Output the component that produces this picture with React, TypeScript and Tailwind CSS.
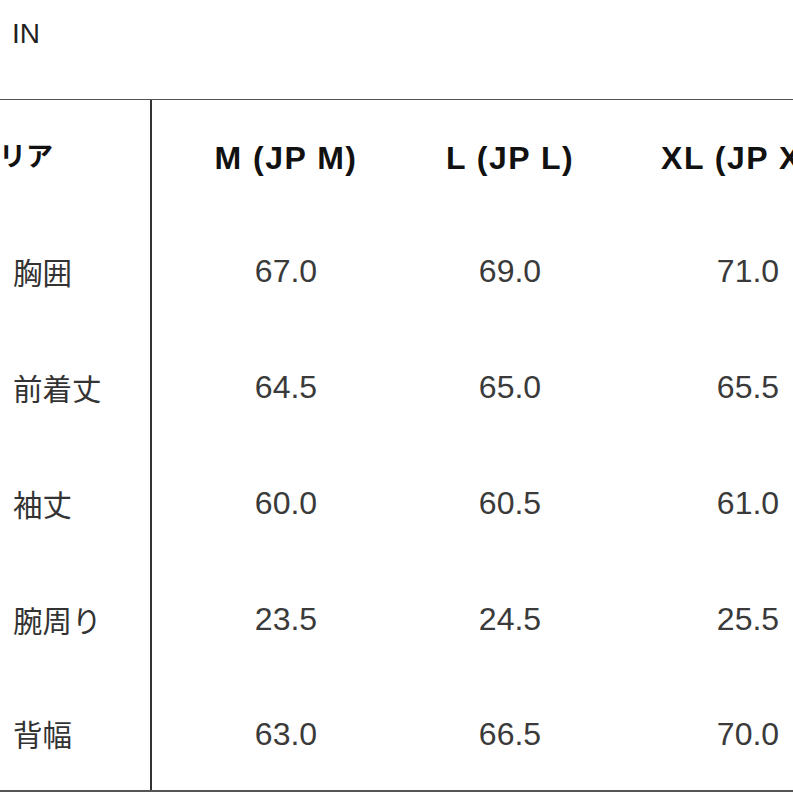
const sizes = ["M (JP M)", "L (JP L)", "XL (JP XL)"];

const rows: { label: string; values: string[] }[] = [
  { label: "胸囲", values: ["67.0", "69.0", "71.0"] },
  { label: "前着丈", values: ["64.5", "65.0", "65.5"] },
  { label: "袖丈", values: ["60.0", "60.5", "61.0"] },
  { label: "腕周り", values: ["23.5", "24.5", "25.5"] },
  { label: "背幅", values: ["63.0", "66.5", "70.0"] },
];

// widths of the three size columns, picked so their centres land where the chart has them
const colW = ["w-[268px]", "w-[180px]", "w-[296px]"];

export default function App() {
  return (
    <div
      className="w-[793px] h-[793px] overflow-hidden bg-white text-[#333]"
      style={{ fontFamily: '"Liberation Sans", "Noto Sans CJK JP", Arial, sans-serif' }}
    >
      <div className="h-[99px] pl-[12px] pt-[16px]">
        <span className="text-[28px] leading-[36px] text-[#222]">IN</span>
      </div>

      <div className="border-t border-b-2 border-[#555] w-[900px]">
        <div className="flex h-[113px] items-center">
          <div className="w-[152px] h-full border-r-2 border-[#333] flex items-center overflow-hidden">
            <span className="ml-[-28px] mt-[2px] text-[27px] font-bold text-[#111] whitespace-nowrap">エリア</span>
          </div>
          {sizes.map((s, i) => (
            <div key={s} className={`${colW[i]} mt-[2px] text-center text-[32px] font-bold tracking-[1.5px] text-[#111] whitespace-nowrap`}>
              {s}
            </div>
          ))}
        </div>

        {rows.map((r, ri) => (
          <div key={r.label} className={`flex items-center ${ri === rows.length - 1 ? "h-[113px]" : "h-[116px]"}`}>
            <div className="w-[152px] h-full border-r-2 border-[#333] flex items-center pl-[13px]">
              <span className="text-[29.5px] text-[#333]" style={{ fontFamily: '"Noto Sans CJK JP", sans-serif' }}>
                {r.label}
              </span>
            </div>
            {r.values.map((v, i) => (
              <div key={i} className={`${colW[i]} text-center text-[32px] text-[#3a3a3a]`}>
                {v}
              </div>
            ))}
          </div>
        ))}
      </div>
    </div>
  );
}
